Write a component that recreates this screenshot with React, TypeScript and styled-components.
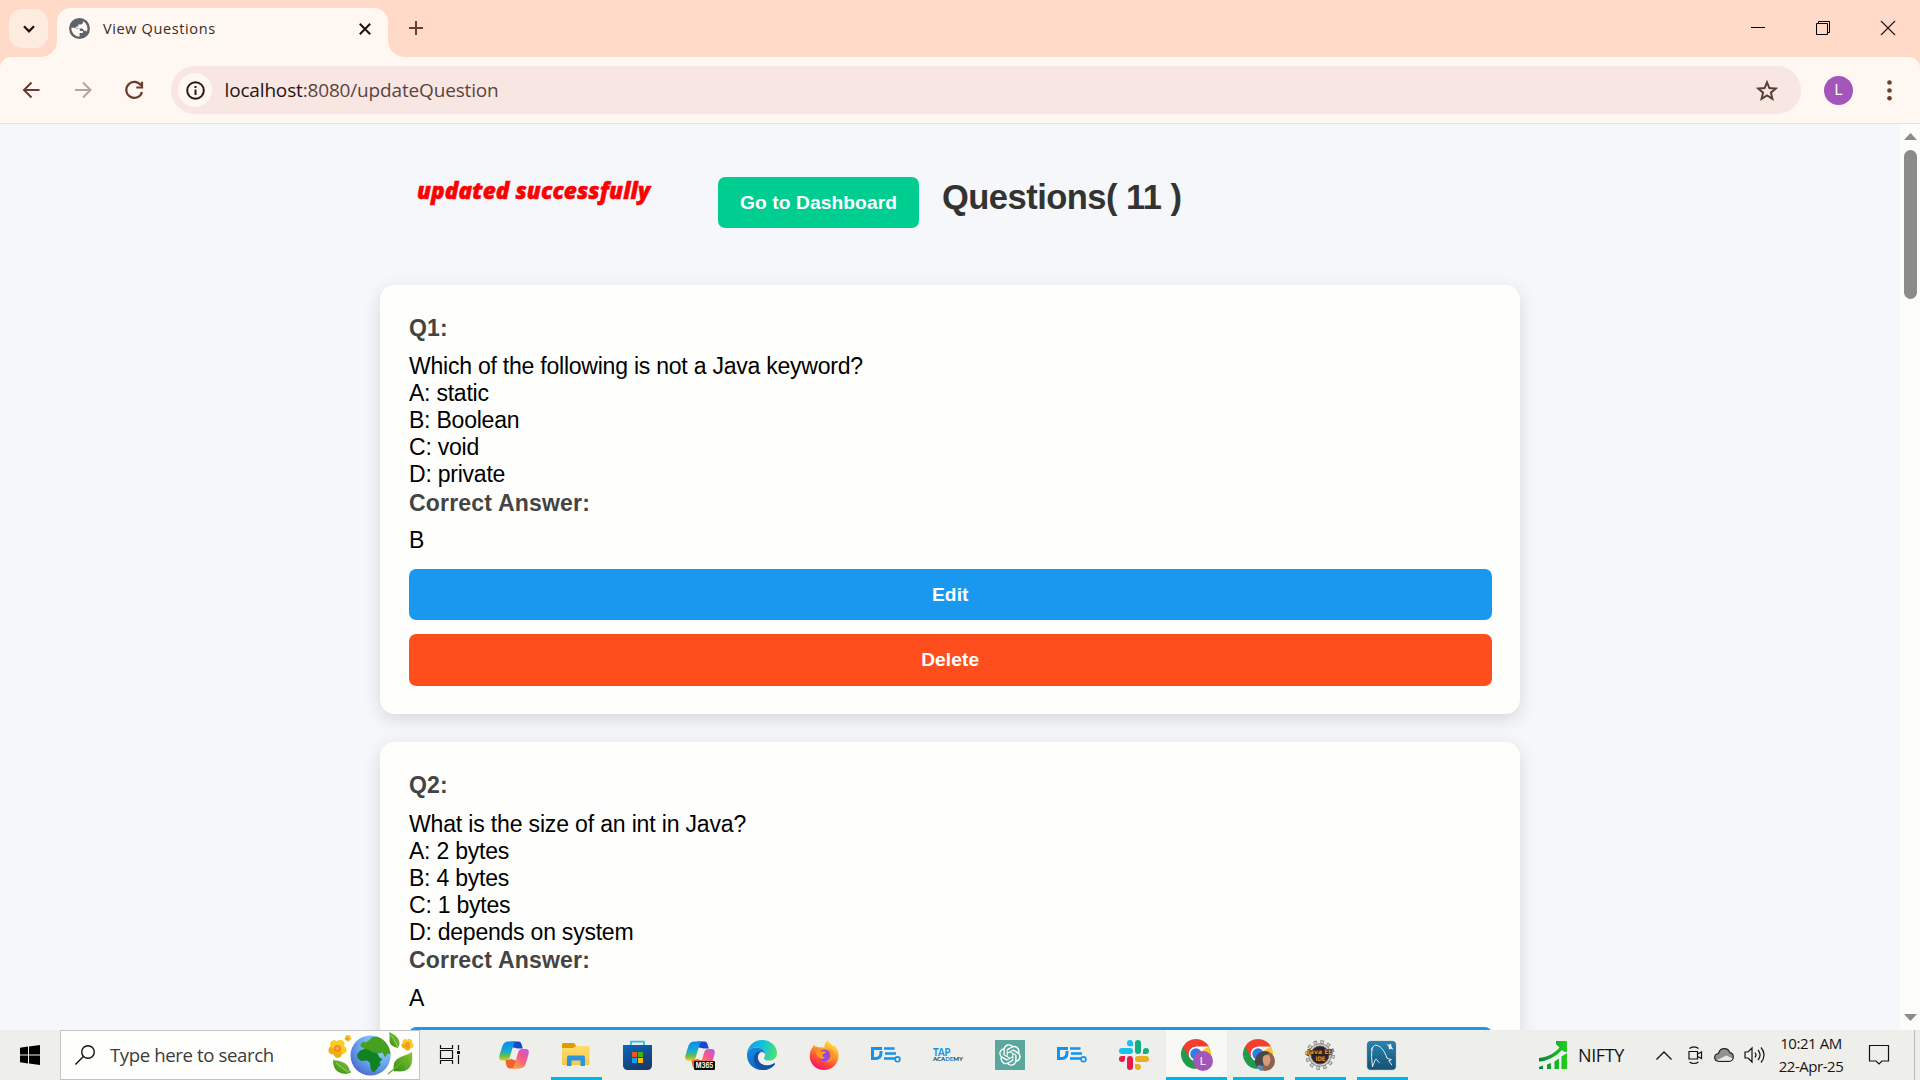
import React from "react";
import styled, { createGlobalStyle } from "styled-components";

const ui = `"Open Sans", "Noto Sans", sans-serif`;
const arial = `"Liberation Sans", Arial, sans-serif`;

const Global = createGlobalStyle`
  * { box-sizing: border-box; }
  html, body { margin: 0; padding: 0; overflow: hidden; }
  svg { display: block; flex: none; overflow: visible; }
`;

const Screen = styled.div`
  width: 1920px;
  height: 1080px;
  display: flex;
  flex-direction: column;
  overflow: hidden;
  background: #f5f7fa;
`;

/* ---------- browser chrome ---------- */
const TabStrip = styled.div`
  height: 57px;
  flex: none;
  display: flex;
  background: #ffdac8;
  padding-left: 9px;
`;
const TabSearch = styled.div`
  width: 39px;
  height: 39px;
  margin-top: 9px;
  border-radius: 13px;
  background: #ffece1;
  display: flex;
  align-items: center;
  justify-content: center;
`;
const Tab = styled.div`
  position: relative;
  margin: 8px 0 0 9px;
  width: 331px;
  height: 49px;
  border-radius: 14px 14px 0 0;
  background: #fff7f2;
  display: flex;
  align-items: center;
  padding: 0 17px 8px 12px;
  &::before,
  &::after {
    content: "";
    position: absolute;
    bottom: 0;
    width: 16px;
    height: 16px;
  }
  &::before {
    left: -16px;
    background: radial-gradient(circle at 0 0, transparent 15.5px, #fff7f2 16px);
  }
  &::after {
    right: -16px;
    background: radial-gradient(circle at 100% 0, transparent 15.5px, #fff7f2 16px);
  }
`;
const TabTitle = styled.div`
  flex: 1;
  margin-left: 13px;
  font: 400 14.5px/20px ${ui};
  letter-spacing: 0.62px;
  color: #3a2a24;
  white-space: nowrap;
`;
const NewTab = styled.div`
  margin-left: 21px;
  padding-top: 21px;
`;
const WindowButtons = styled.div`
  margin-left: auto;
  padding: 21px 25px 0 0;
  display: flex;
  gap: 51px;
`;
const ToolbarBack = styled.div`
  flex: none;
  background: #ffdac8;
`;
const Toolbar = styled.div`
  height: 67px;
  display: flex;
  align-items: center;
  background: #fff7f2;
  border-bottom: 1px solid #f8dfd5;
  border-radius: 11px 11px 0 0;
  padding: 0 24px 0 21px;
`;
const NavButtons = styled.div`
  display: flex;
  width: 150px;
  gap: 31.5px;
`;
const Omnibox = styled.div`
  width: 1630px;
  height: 48px;
  border-radius: 24px;
  background: #f8e6e3;
  display: flex;
  align-items: center;
  padding: 0 23px 0 7px;
`;
const SiteInfo = styled.div`
  width: 34px;
  height: 34px;
  border-radius: 50%;
  background: #fff7f2;
  display: flex;
  align-items: center;
  justify-content: center;
`;
const Url = styled.div`
  flex: 1;
  margin-left: 12.5px;
  font: 400 19px/26px ${ui};
  letter-spacing: -0.16px;
  color: #5a443d;
  white-space: nowrap;
  span { color: #26140f; }
`;
const Avatar = styled.div`
  width: 29px;
  height: 29px;
  border-radius: 50%;
  background: #a355b9;
  color: #fff;
  font: 400 15px/29px Roboto, sans-serif;
  text-align: center;
  margin-left: 23px;
`;
const Dots = styled.div`
  margin-left: auto;
  padding-right: 4px;
`;

/* ---------- page ---------- */
const Viewport = styled.div`
  height: 906px;
  flex: none;
  display: flex;
  overflow: hidden;
`;
const Page = styled.main`
  width: 1900px;
  padding-left: 380px;
  font-family: ${arial};
`;
const Header = styled.header`
  height: 160.6px;
  display: flex;
  align-items: flex-start;
  padding-left: 37px;
  white-space: nowrap;
`;
const Message = styled.div`
  width: 301px;
  margin-top: 51px;
  font: italic 900 22.5px/32px "Noto Sans", "Open Sans", sans-serif;
  letter-spacing: 0.1px;
  -webkit-text-stroke: 0.5px #fd0002;
  color: #fd0002;
`;
const Button = styled.button<{ $color: string }>`
  display: block;
  width: 100%;
  height: 51.4px;
  border: 0;
  border-radius: 7.2px;
  padding: 0;
  background: ${(p) => p.$color};
  color: #fffffe;
  font: 700 19.2px/22px ${arial};
  letter-spacing: 0.1px;
`;
const DashboardSlot = styled.div`
  width: 201px;
  margin: 53px 23px 0 0;
`;
const Title = styled.h1`
  margin: 53px 0 0;
  font: 700 34.5px/40px ${arial};
  letter-spacing: -0.52px;
  color: #333332;
`;
const Card = styled.section`
  width: 1140px;
  height: 429.2px;
  margin-bottom: 28.4px;
  padding: 30px 28.5px 0 29px;
  border-radius: 14.4px;
  background: #fefffc;
  box-shadow: 0 5px 18px rgba(0, 0, 0, 0.13);
`;
const Label = styled.div<{ $top?: number; $bottom?: number }>`
  margin: ${(p) => p.$top ?? 0}px 0 ${(p) => p.$bottom ?? 11.4}px;
  font: 700 23.04px/27px ${arial};
  letter-spacing: 0.18px;
  color: #444443;
`;
const Line = styled.div<{ $track?: number }>`
  font: 400 23.04px/27px ${arial};
  letter-spacing: ${(p) => p.$track ?? -0.24}px;
  color: #000;
  white-space: nowrap;
`;
const Actions = styled.div`
  margin-top: 14.8px;
  display: flex;
  flex-direction: column;
  gap: 14px;
`;
const Scrollbar = styled.div`
  width: 20px;
  background: #fcfdfa;
  display: flex;
  flex-direction: column;
  align-items: center;
  padding: 9px 0;
`;
const Thumb = styled.div`
  width: 13px;
  height: 149px;
  margin: 10px 0 auto;
  border-radius: 7px;
  background: #8b8b8a;
`;

/* ---------- taskbar ---------- */
const Taskbar = styled.footer`
  height: 50px;
  flex: none;
  display: flex;
  background: #eeeeeb;
  position: relative;
`;
const Start = styled.div`
  width: 60px;
  padding: 15px 0 0 20px;
`;
const Search = styled.div`
  width: 360px;
  height: 50px;
  border: 1px solid #c3c4c3;
  background: #fefffc;
  display: flex;
  align-items: center;
  padding-left: 14px;
`;
const SearchText = styled.div`
  width: 218px;
  margin-left: 15px;
  font: 400 18.6px/26px ${ui};
  letter-spacing: -0.39px;
  color: #3b3b3b;
  white-space: nowrap;
`;
const App = styled.div<{ $open?: boolean; $active?: boolean }>`
  width: 62px;
  height: 50px;
  display: flex;
  flex-direction: column;
  align-items: center;
  justify-content: center;
  background: ${(p) => (p.$active ? "linear-gradient(to right, transparent 1px, #f8f8f5 1px)" : "none")};
  position: relative;
  &::after {
    content: "";
    position: absolute;
    bottom: 0;
    left: ${(p) => (p.$active ? 1 : 6)}px;
    width: ${(p) => (p.$active ? 61 : 51)}px;
    height: 3px;
    background: ${(p) => (p.$open ? "#00b5ea" : "none")};
  }
`;
const TaskView = styled.div`
  width: 63px;
  padding: 15px 0 0 20px;
`;
const Tray = styled.div`
  margin-left: auto;
  width: 381px;
  display: flex;
  align-items: center;
`;
const Nifty = styled.div`
  width: 78px;
  margin-left: 11px;
  font: 400 18px/24px ${ui};
  letter-spacing: -0.4px;
  color: #151515;
`;
const TrayIcons = styled.div`
  display: flex;
  align-items: center;
  width: 110px;
`;
const TrayIcon = styled.div<{ $w: number }>`
  width: ${(p) => p.$w}px;
`;
const Clock = styled.div`
  width: 90px;
  text-align: center;
  font: 400 15px/23px ${ui};
  letter-spacing: -0.45px;
  color: #151515;
  white-space: nowrap;
`;
const Notify = styled.div`
  margin-left: 13px;
`;
const PeekLine = styled.div`
  width: 1px;
  height: 50px;
  margin: 0 5px 0 auto;
  background: #bcbcba;
`;

/* ---------- drawings ---------- */
const Copilot = ({ id, m365 }: { id: string; m365?: boolean }) => (
  <svg width="30" height="30" viewBox="0 0 30 30">
    <defs>
      <linearGradient id={id + "a"} x1="0" y1="0" x2="0" y2="1">
        <stop offset="0" stopColor="#0b8af0" />
        <stop offset=".45" stopColor="#12a9d5" />
        <stop offset=".75" stopColor="#5cbf55" />
        <stop offset="1" stopColor="#ecc713" />
      </linearGradient>
      <linearGradient id={id + "b"} x1="1" y1="0" x2=".3" y2="1">
        <stop offset="0" stopColor="#b45cf0" />
        <stop offset=".45" stopColor="#f4568c" />
        <stop offset="1" stopColor="#ff9a4c" />
      </linearGradient>
    </defs>
    <path d="M12 1.500h7.500c1.800 0 2.500 1.200 3 2.800l1.300 4.200h-5L12 7z" fill="#1747d1" />
    <path d="M18 28.500h-7c-2 0-3-1-3.600-3L6.300 20l6-1 6 2z" fill="#f2652f" />
    <path d="M9.500 1.500h7.700c-1.700.6-2.400 2.100-3 4.200l-3.300 11.100c-.8 2.600-2 3.700-4.400 3.700H3.300C.5 20.500-.3 18 .5 15.200L3.200 6.400C4.300 3 6.300 1.500 9.500 1.500z" fill={`url(#${id}a)`} />
    <path d="M20.500 28.500h-8c1.700-.6 2.600-2.200 3.200-4.200l3.200-11.100c.8-2.600 2-4.200 4.500-4.200h3.300c2.900 0 3.600 2.500 2.800 5.300l-2.700 9.300c-1 3.400-3 4.900-6.300 4.900z" fill={`url(#${id}b)`} />
    {m365 && (
      <>
        <rect x="9" y="21" width="21" height="9" rx="1.200" fill="#090909" />
        <text x="19.500" y="28.200" textAnchor="middle" fontFamily="Inter, sans-serif" fontWeight="700" fontSize="7.200" textLength="17.500" lengthAdjust="spacingAndGlyphs" fill="#fff">M365</text>
      </>
    )}
  </svg>
);

const Explorer = () => (
  <svg width="28" height="26" viewBox="0 0 28 26">
    <defs>
      <linearGradient id="fold" x1="0" y1="0" x2="0" y2="1">
        <stop offset="0" stopColor="#ffdc6b" />
        <stop offset="1" stopColor="#f6c84c" />
      </linearGradient>
    </defs>
    <path d="M0 2.500A1.500 1.500 0 0 1 1.500 1H12l2 2.500V6H0z" fill="#dd9a06" />
    <path d="M0 6h11l3-2h12.500L27.500 5.200V22a1 1 0 0 1-1 1H1a1 1 0 0 1-1-1z" fill="url(#fold)" />
    <path d="M5 24V15.500a2 2 0 0 1 2-2h14a2 2 0 0 1 2 2V24h-4.500v-5.500h-9V24z" fill="#2c93dd" />
  </svg>
);

const Store = () => (
  <svg width="31" height="30" viewBox="0 0 31 30">
    <defs>
      <linearGradient id="store" x1="0" y1="0" x2=".5" y2="1">
        <stop offset="0" stopColor="#0768bd" />
        <stop offset="1" stopColor="#1b3a70" />
      </linearGradient>
    </defs>
    <path d="M8 6V1.700h13V6" fill="none" stroke="#2dbdf0" strokeWidth="1.800" />
    <path d="M0 5h29v20.500a4.500 4.500 0 0 1-4.500 4.500h-20A4.500 4.500 0 0 1 0 25.500z" fill="url(#store)" />
    <path d="M9 12h5v5H9z" fill="#f35325" />
    <path d="M15 12h5v5h-5z" fill="#3fb511" />
    <path d="M9 18h5v5H9z" fill="#0ba2f2" />
    <path d="M15 18h5v5h-5z" fill="#ffba08" />
  </svg>
);

const Edge = () => (
  <svg width="30" height="30" viewBox="0 0 30 30">
    <defs>
      <linearGradient id="eg1" x1="0" y1=".3" x2="1" y2=".5">
        <stop offset="0" stopColor="#159fe6" />
        <stop offset=".5" stopColor="#11c2da" />
        <stop offset="1" stopColor="#4fe070" />
      </linearGradient>
      <linearGradient id="eg2" x1="0" y1="0" x2=".8" y2="1">
        <stop offset="0" stopColor="#168fe2" />
        <stop offset="1" stopColor="#0a55b5" />
      </linearGradient>
    </defs>
    <path d="M0 14C.5 6 7 0 15 0c9 0 15 6.500 15 13 0 4.600-3.400 7.600-7.800 7.600-3.600 0-5.200-1.300-5.200-2.400 0-.9 1.200-1.500 1.200-3.700C18.200 11 14.500 7.500 9 7.500 4.500 7.500 1 10 0 14z" fill="url(#eg1)" />
    <path d="M0 14C1 10 4.500 7.500 9 7.500c5.300 0 9 3.200 9.200 6.700-.8-1.600-2.200-2.200-3.400-2.200-2.200 0-4 2.500-4 5.300 0 4.700 4 8.200 9 8.200 3.400 0 6-1.400 7.300-2.200.7-.3 1.200.2.800.9C25.200 28 20.500 30 15 30 6 30 0 23 0 15z" fill="url(#eg2)" />
    <path d="M9.500 12.500c-3.500 3-3.700 9.500 0 13.500 2 2.300 4.500 3.600 7.500 3.900 4.500-.3 8.300-2.300 10.900-5.700.4-.7-.1-1.200-.8-.9-1.300.8-3.900 2.200-7.300 2.200-5 0-9-3.500-9-8.200 0-2.300 1.200-4.300 2.700-5-1.400-.6-2.900-.6-4 .2z" fill="#1152a4" />
  </svg>
);

const Firefox = () => (
  <svg width="30" height="30" viewBox="0 0 30 30">
    <defs>
      <linearGradient id="ff" x1=".8" y1="0" x2=".3" y2="1">
        <stop offset="0" stopColor="#fff04a" />
        <stop offset=".4" stopColor="#ff9a24" />
        <stop offset=".75" stopColor="#ff4340" />
        <stop offset="1" stopColor="#f0146a" />
      </linearGradient>
    </defs>
    <path d="M18.500 0c1 3 4.600 4.400 6.400 7.200-.1-1-.2-1.700-.6-2.500 3 2.400 5.200 6.300 5.200 10.800C29.500 24 23 30 15 30 7 30 .7 24 .7 16c0-3.400 1.300-6.800 3-8.700C4 6.200 4.700 5 5.500 4.500c0 1 .2 1.700.6 2.300 1.800-.2 3.400 0 4.700.7 2-.6 3.200-.4 4.400.4C15.200 5 16.500 2 18.500 0z" fill="url(#ff)" />
    <circle cx="15.500" cy="15.500" r="6" fill="#9a48dc" />
    <path d="M6 11.500c2-1.200 4-1 5.500 0 2 .1 4.800-.2 5.500.6-.5 1.500-3.200 1.800-3.500 3-.1 1.500 1 2.400 2.500 2.400-1.500 1.600-4 1.800-5.500.6C8.500 16.500 7.500 13.500 6 11.500z" fill="#ff9a26" />
    <path d="M15.500 9.600c3.500-.8 6.300 2 6.100 5.900-.2 3.300-2.600 5.800-6.100 6 5.500 1.200 9.200-1.500 9.200-6.500C24.700 10 19.500 7.800 15.500 9.600z" fill="#ff8d33" />
  </svg>
);

const DeLogo = () => (
  <svg width="30" height="17" viewBox="0 0 30 17">
    <g fill="none" stroke="#1392ee" strokeWidth="3">
      <path d="M1.500 0v13M0 1.500h11M1.500 11.500h3c3.500 0 5.500-2 5.500-6V4" />
      <path d="M13 1.500h10.500M14 6.500h11M13 11.500h11" strokeWidth="2.600" />
      <circle cx="26.500" cy="12.300" r="2.400" strokeWidth="1.600" />
    </g>
  </svg>
);

const TapLogo = () => (
  <svg width="30" height="14" viewBox="0 0 30 14">
    <text x="0" y="8.200" fontFamily="Lato, sans-serif" fontWeight="900" fontSize="10.500" textLength="17.500" lengthAdjust="spacingAndGlyphs" fill="#1a94e2">TAP</text>
    <text x="0" y="13.200" fontFamily="Lato, sans-serif" fontWeight="900" fontSize="6.200" textLength="30" lengthAdjust="spacingAndGlyphs" fill="#1b4a68">
      ACA<tspan fill="#1a94e2">DE</tspan>MY
    </text>
  </svg>
);

const Gpt = () => (
  <svg width="30" height="30" viewBox="0 0 30 30">
    <path d="M0 0h30v30H0z" fill="#5aa89d" />
    <g transform="translate(4.200 4.200) scale(.9)" fill="#fff">
      <path d="M22.282 9.821a5.985 5.985 0 0 0-.516-4.910 6.046 6.046 0 0 0-6.510-2.900A6.065 6.065 0 0 0 4.981 4.180a5.985 5.985 0 0 0-3.998 2.900 6.046 6.046 0 0 0 .743 7.097 5.980 5.980 0 0 0 .510 4.911 6.051 6.051 0 0 0 6.515 2.900A5.985 5.985 0 0 0 13.260 24a6.056 6.056 0 0 0 5.772-4.206 5.990 5.990 0 0 0 3.997-2.900 6.056 6.056 0 0 0-.747-7.073zM13.260 22.430a4.476 4.476 0 0 1-2.876-1.040l.141-.081 4.779-2.758a.795.795 0 0 0 .392-.681v-6.737l2.020 1.168a.071.071 0 0 1 .038.052v5.583a4.504 4.504 0 0 1-4.494 4.494zM3.600 18.304a4.470 4.470 0 0 1-.535-3.014l.142.085 4.783 2.759a.771.771 0 0 0 .780 0l5.843-3.369v2.332a.080.080 0 0 1-.033.062L9.740 19.950a4.500 4.500 0 0 1-6.140-1.646zM2.340 7.896a4.485 4.485 0 0 1 2.366-1.973V11.600a.766.766 0 0 0 .388.676l5.815 3.355-2.020 1.168a.076.076 0 0 1-.071 0l-4.830-2.786A4.504 4.504 0 0 1 2.340 7.872zm16.597 3.855l-5.833-3.387L15.119 7.200a.076.076 0 0 1 .071 0l4.830 2.791a4.494 4.494 0 0 1-.676 8.105v-5.678a.790.790 0 0 0-.407-.667zm2.010-3.023l-.141-.085-4.774-2.782a.776.776 0 0 0-.785 0L9.409 9.230V6.897a.066.066 0 0 1 .028-.061l4.830-2.787a4.500 4.500 0 0 1 6.680 4.660zm-12.640 4.135l-2.020-1.164a.080.080 0 0 1-.038-.057V6.075a4.500 4.500 0 0 1 7.375-3.453l-.142.080L8.704 5.460a.795.795 0 0 0-.393.681zm1.097-2.365l2.602-1.500 2.607 1.500v2.999l-2.597 1.500-2.607-1.500z" />
    </g>
  </svg>
);

const Slack = () => (
  <svg width="30" height="30" viewBox="0 0 30 30">
    <g fill="#19c0ef">
      <rect x="0" y="8" width="14" height="6" rx="3" />
      <path d="M8 3a3 3 0 1 1 6 0v3.200h-3A3 3 0 0 1 8 3z" />
    </g>
    <g fill="#12ae83">
      <rect x="16" y="0" width="6" height="14" rx="3" />
      <path d="M24 11a3 3 0 1 1 3 3h-3z" />
    </g>
    <g fill="#e61b48">
      <rect x="8" y="16" width="6" height="14" rx="3" />
      <path d="M6 16v3a3 3 0 1 1-3-3z" />
    </g>
    <g fill="#e9b022">
      <rect x="16" y="16" width="14" height="6" rx="3" />
      <path d="M16 24h3a3 3 0 1 1-3 3z" />
    </g>
  </svg>
);

const ChromeIcon = ({ photo }: { photo?: boolean }) => (
  <svg width="30" height="32" viewBox="0 0 30 32">
    <path d="M15 15 28 7.500A15 15 0 0 1 15 30z" fill="#fcc72b" />
    <path d="M15 15v15A15 15 0 0 1 2 7.500z" fill="#219a4c" />
    <path d="M2 7.500A15 15 0 0 1 28 7.500H15L8.500 18.700z" fill="#f0402f" />
    <circle cx="15" cy="15" r="7.300" fill="#fff" />
    <circle cx="15" cy="15" r="5.700" fill="#2b7de9" />
    {photo ? (
      <>
        <circle cx="22" cy="22" r="10" fill="#8d6251" />
        <path d="M13 18c2-5 8-7 13-5l-4 6-2 8-5 2c-3-3-4-7-2-11z" fill="#49474c" />
        <path d="M20 18c2-3 6-3 7 0s0 8-3 9-5-5-4-9z" fill="#dd9a78" />
        <path d="M15 26l5 1-1 5c-2 0-4-2-5-4z" fill="#5190bd" />
      </>
    ) : (
      <>
        <circle cx="22" cy="22" r="10" fill="#a355b9" />
        <text x="21.800" y="26.200" textAnchor="middle" fontFamily="Roboto, sans-serif" fontSize="11.500" fill="#fff">L</text>
      </>
    )}
  </svg>
);

const Eclipse = () => (
  <svg width="30" height="30" viewBox="0 0 30 30">
    <circle cx="15" cy="15" r="12.800" fill="none" stroke="#787878" strokeWidth="4" strokeDasharray="3.400 3.300" />
    <circle cx="15" cy="15" r="12.800" fill="none" stroke="#cfcfcd" strokeWidth="2.600" strokeDasharray="2.400 4.300" strokeDashoffset="-.5" />
    <circle cx="15" cy="15" r="11.300" fill="#d5d5d3" stroke="#777" strokeWidth=".8" />
    <circle cx="15" cy="15" r="9" fill="#272333" stroke="#555" />
    <text x="15" y="14.300" textAnchor="middle" fontFamily="DejaVu Sans, sans-serif" fontWeight="700" fontSize="6.300" textLength="25" lengthAdjust="spacingAndGlyphs" fill="#f58a1c" stroke="#2a1808" strokeWidth=".9" paintOrder="stroke">Java EE</text>
    <text x="15.500" y="20.800" textAnchor="middle" fontFamily="DejaVu Sans, sans-serif" fontWeight="700" fontSize="6.300" textLength="10" lengthAdjust="spacingAndGlyphs" fill="#f58a1c">IDE</text>
  </svg>
);

const MySql = () => (
  <svg width="31" height="29" viewBox="0 0 31 29">
    <defs>
      <linearGradient id="mysql" x1="0" y1="0" x2="0" y2="1">
        <stop offset="0" stopColor="#2a83ad" />
        <stop offset="1" stopColor="#155274" />
      </linearGradient>
    </defs>
    <rect x=".4" y=".4" width="28.200" height="28.200" rx="3" fill="url(#mysql)" stroke="#1b6489" strokeWidth=".8" />
    <path d="M5.500 26c-.3-5-1.300-9-.8-14 .2-4.500 1.300-7.500 3.800-7.800 4.500 0 9 5 11.500 13l4.500 1.500-2.700 1 3.200 4.500M5.500 25.500c1.500-2 1.500-6 3.500-7.500 1.500.8 1.500 2.500 3.500 3.800M4.800 9.500c-.8-1.500 0-3 1.200-3.200" fill="none" stroke="#e8f1f6" strokeWidth="1" />
    <path d="M19.500 3.200l2.500.5 2-1 .6 3.300 2 2.500-2.600-.8-2 .8-.3-3z" fill="#e8f1f6" />
  </svg>
);

const Flower = ({ x, y, s }: { x: number; y: number; s: number }) => (
  <g transform={`translate(${x} ${y}) scale(${s})`}>
    {[0, 72, 144, 216, 288].map((a) => (
      <ellipse key={a} cx="0" cy="-5" rx="4" ry="4" fill={a > 100 && a < 230 ? "#f1ae10" : "#fbcb22"} transform={`rotate(${a + 34})`} />
    ))}
    <circle r="3.400" fill="#f58a1b" />
    <circle r="1.600" fill="#f9a94c" />
  </g>
);

const SearchArt = () => (
  <svg width="88" height="46" viewBox="0 0 88 46">
    <defs>
      <radialGradient id="sea" cx=".7" cy=".25" r=".9">
        <stop offset="0" stopColor="#a4d8ff" />
        <stop offset=".55" stopColor="#6aa5ee" />
        <stop offset="1" stopColor="#435fc5" />
      </radialGradient>
      <linearGradient id="leaf" x1="0" y1="1" x2="1" y2="0">
        <stop offset="0" stopColor="#2f8f14" />
        <stop offset="1" stopColor="#8cc63a" />
      </linearGradient>
      <clipPath id="earth"><circle cx="42.500" cy="23.500" r="20" /></clipPath>
    </defs>
    <circle cx="42.500" cy="23.500" r="20" fill="url(#sea)" />
    <g clipPath="url(#earth)">
      <path d="M32.500 12l3-2.500 2 1 4-2.500 2-2.500 8-2 8 4 5 9-2 6-3-1-2.500 4-2.500-5-4 1-3-1.500-3 .5-3-1.500-3 1-3.500-.5 1-3.500-3-1z" fill="#46a01f" />
      <path d="M29 22.500l3-4 5-1.500 4 1 3 2 5 .5 2.500 5 3 1.500-3.500 4-.5 4-3.500 4.500-2.500.5-2-4-.5-5-3-2.500-6 .5-3.500-3z" fill="#118224" />
      <path d="M50.500 32.500l1.500-2.500.5 3-1.500 2z" fill="#118224" />
    </g>
    <Flower x={9.500} y={16.500} s={1.050} />
    <Flower x={20} y={6} s={0.380} />
    <Flower x={79.500} y={12.500} s={0.680} />
    <path d="M5 28c7 1 15 2 16.500 10 .4 1 1 1.500 2 2-2 1.500-5 2.500-9 1.500C7.500 40 5 35 5 28z" fill="url(#leaf)" />
    <path d="M8 31c4 3 8 6 12 9" stroke="#c5e183" fill="none" strokeWidth=".7" />
    <path d="M61 0c7 3 11 7 10.500 12-.5 2-1 3-2 4-4-1-8-3-8-8 0-3 .5-5-.5-8z" fill="url(#leaf)" />
    <path d="M63 3c3 4 5 8 6.500 12" stroke="#c5e183" fill="none" strokeWidth=".7" />
    <path d="M84 20c1 9 0 17-8 19-4 1-8 0-10 .5 0-2-1-4 0-8 2-7 11-7 18-11.500z" fill="url(#leaf)" />
    <path d="M80 25c-6 5-11 10-20 17" stroke="#71a92c" fill="none" strokeWidth="1.300" />
  </svg>
);

const Globe = () => (
  <svg width="21" height="21" viewBox="0 0 21 21">
    <circle cx="10.500" cy="10.500" r="10.500" fill="#5e6368" />
    <path fill="#fff7f2" d="M2.300 9.800h4.900c2.600 0 3.800 1.100 3.800 3.100h2.900v2.200h-3.300v3.600A8.300 8.300 0 0 1 2.300 9.800zM13.800 3c.6 2.200-.4 3.500-2.300 3.500H9.300v1.900H7v2.100h5.800c1.300 0 1.800 1 1.800 2.300h1.800c.8 0 1.200.6 1.300 1.200A8.300 8.300 0 0 0 13.800 3z" />
  </svg>
);

/* ---------- data ---------- */
const questions = [
  {
    n: 1,
    text: "Which of the following is not a Java keyword?",
    track: -0.24,
    options: ["A: static", "B: Boolean", "C: void", "D: private"],
    answer: "B",
  },
  {
    n: 2,
    text: "What is the size of an int in Java?",
    track: -0.17,
    options: ["A: 2 bytes", "B: 4 bytes", "C: 1 bytes", "D: depends on system"],
    answer: "A",
  },
];

export default function ViewQuestions() {
  return (
    <Screen>
      <Global />
      <TabStrip>
        <TabSearch>
          <svg width="12" height="8" viewBox="0 0 12 8"><path d="M1 1.300l5 5 5-5" fill="none" stroke="#1f120e" strokeWidth="2.300" /></svg>
        </TabSearch>
        <Tab>
          <Globe />
          <TabTitle>View Questions</TabTitle>
          <svg width="12" height="12" viewBox="0 0 12 12"><path d="M.8.8l10.400 10.400M11.200.8.8 11.200" stroke="#1f120e" strokeWidth="2" /></svg>
        </Tab>
        <NewTab>
          <svg width="14" height="14" viewBox="0 0 14 14"><path d="M7 0v14M0 7h14" stroke="#6b3b2c" strokeWidth="2" /></svg>
        </NewTab>
        <WindowButtons>
          <svg width="14" height="14" viewBox="0 0 14 14"><path d="M0 6.500h14" stroke="#000" /></svg>
          <svg width="14" height="14" viewBox="0 0 14 14"><path d="M.5 2.500h11v11H.5zM2.500 2.500v-2h11v11h-2" fill="none" stroke="#000" /></svg>
          <svg width="14" height="14" viewBox="0 0 14 14"><path d="M0 0l14 14M14 0 0 14" stroke="#1a1210" strokeWidth="1.100" /></svg>
        </WindowButtons>
      </TabStrip>

      <ToolbarBack>
        <Toolbar>
          <NavButtons>
            <svg width="20" height="18" viewBox="0 0 20 18"><path d="M18.500 9H3M10.500 1.500 3 9l7.500 7.500" fill="none" stroke="#6b3b2c" strokeWidth="2" /></svg>
            <svg width="20" height="18" viewBox="0 0 20 18"><path d="M2 9h15.500M10 1.500 17.500 9 10 16.500" fill="none" stroke="#b5a39c" strokeWidth="2" /></svg>
            <svg width="20" height="18" viewBox="0 0 20 18"><path d="M17 4.500A8 8 0 1 0 18 11M18 .8V6.500h-5.700" fill="none" stroke="#6b3b2c" strokeWidth="2.200" /></svg>
          </NavButtons>
          <Omnibox>
            <SiteInfo>
              <svg width="19" height="19" viewBox="0 0 19 19"><circle cx="9.500" cy="9.500" r="8.300" fill="none" stroke="#2a1813" strokeWidth="2" /><path d="M9.500 8.500v5.500M9.500 5v2" stroke="#2a1813" strokeWidth="2" /></svg>
            </SiteInfo>
            <Url><span>localhost</span>:8080/updateQuestion</Url>
            <svg width="22" height="21" viewBox="0 0 22 21"><path d="M11 2.300l2.400 5.800 6.300.5-4.800 4.100 1.500 6.100L11 15.500l-5.400 3.300 1.500-6.100-4.800-4.100 6.300-.5z" fill="none" stroke="#573f37" strokeWidth="2" /></svg>
          </Omnibox>
          <Avatar>L</Avatar>
          <Dots>
            <svg width="5" height="21" viewBox="0 0 5 21"><g fill="#6b3b2c"><circle cx="2.500" cy="2.500" r="2.300" /><circle cx="2.500" cy="10.500" r="2.300" /><circle cx="2.500" cy="18.300" r="2.300" /></g></svg>
          </Dots>
        </Toolbar>
      </ToolbarBack>

      <Viewport>
        <Page>
          <Header>
            <Message>updated successfully</Message>
            <DashboardSlot><Button $color="#00ce90">Go to Dashboard</Button></DashboardSlot>
            <Title>Questions( 11 )</Title>
          </Header>
          {questions.map((q) => (
            <Card key={q.n}>
              <Label>Q{q.n}:</Label>
              <Line $track={q.track}>{q.text}</Line>
              {q.options.map((o) => (
                <Line key={o}>{o}</Line>
              ))}
              <Label $top={1.6} $bottom={10.6}>Correct Answer:</Label>
              <Line>{q.answer}</Line>
              <Actions>
                <Button $color="#1899ef">Edit</Button>
                <Button $color="#ff4e1d">Delete</Button>
              </Actions>
            </Card>
          ))}
        </Page>
        <Scrollbar>
          <svg width="13" height="7" viewBox="0 0 13 7"><path d="M0 7 6.500 0 13 7z" fill="#8b8b8a" /></svg>
          <Thumb />
          <svg width="13" height="7" viewBox="0 0 13 7"><path d="M0 0l6.500 7L13 0z" fill="#8b8b8a" /></svg>
        </Scrollbar>
      </Viewport>

      <Taskbar>
        <Start>
          <svg width="20" height="20" viewBox="0 0 20 20"><path d="M0 2.700 8 1.600V9.500H0zM9 1.400 20 0v9.500H9zM0 10.500h8v7.900L0 17.300zM9 10.500h11V20L9 18.500z" fill="#000" /></svg>
        </Start>
        <Search>
          <svg width="20" height="20" viewBox="0 0 20 20"><circle cx="13" cy="7" r="6.300" fill="none" stroke="#111" strokeWidth="1.400" /><path d="M8.400 11.400.4 19.500" stroke="#111" strokeWidth="1.400" /></svg>
          <SearchText>Type here to search</SearchText>
          <SearchArt />
        </Search>
        <TaskView>
          <svg width="20" height="19" viewBox="0 0 20 19"><path d="M.5 0v3.500h12V0M.5 19v-3.500h12V19M.5 5.500h12v8H.5zM18.500 0v5M18.500 10v9" fill="none" stroke="#111" strokeWidth="1.200" /><path d="M17 6h3v3h-3z" fill="#111" /></svg>
        </TaskView>
        <App><Copilot id="c1" /></App>
        <App $open><Explorer /></App>
        <App><Store /></App>
        <App><Copilot id="c2" m365 /></App>
        <App><Edge /></App>
        <App><Firefox /></App>
        <App><DeLogo /></App>
        <App><TapLogo /></App>
        <App><Gpt /></App>
        <App><DeLogo /></App>
        <App><Slack /></App>
        <App $open $active><ChromeIcon /></App>
        <App $open><ChromeIcon photo /></App>
        <App $open><Eclipse /></App>
        <App $open><MySql /></App>
        <Tray>
          <svg width="28" height="28" viewBox="0 0 28 28">
            <defs>
              <linearGradient id="nifty" x1="0" y1="0" x2="1" y2="0">
                <stop offset="0" stopColor="#07813a" />
                <stop offset="1" stopColor="#22d01f" />
              </linearGradient>
            </defs>
            <path d="M0 17C9 16 16 12 20.500 6.500L17 3V0h11v11h-2.500L23 9C17 15.500 9 20 0 20.500z" fill="url(#nifty)" />
            <path d="M0 26l4-1.500V28H0zM8 23.500l4-1.500v6H8zM15.500 20.500l4.500-3V28h-4.500zM22.500 15.500 28 12v16h-5.500z" fill="url(#nifty)" />
          </svg>
          <Nifty>NIFTY</Nifty>
          <TrayIcons>
            <TrayIcon $w={32}>
              <svg width="16" height="9" viewBox="0 0 16 9"><path d="M.5 8.500 8 1l7.500 7.500" fill="none" stroke="#111" strokeWidth="1.300" /></svg>
            </TrayIcon>
            <TrayIcon $w={26}>
              <svg width="15" height="18" viewBox="0 0 15 18"><path d="M1 5.500h8.500v7.500H1zM9.500 8l4-2v6.500l-4-2M1.500 2.500C4 .2 8 .2 10.500 2.500M1.500 16c2.500 2 6.500 2 9 0" fill="none" stroke="#111" strokeWidth="1.200" /></svg>
            </TrayIcon>
            <TrayIcon $w={30}>
              <svg width="20" height="14" viewBox="0 0 20 14"><path d="M5 13.300C2.500 13.300.7 11.700.7 9.500S2.300 5.800 4.500 5.500C5.300 2.500 7.500.7 10.300.7c2.700 0 4.700 1.600 5.500 4 2 .3 3.500 2 3.500 4.200 0 2.500-1.800 4.400-4.300 4.400z" fill="#929292" stroke="#222" strokeWidth="1.200" /><path d="M3 12 12.500 7.500l6 3-1 1.700-2.500.6H5z" fill="#e8e8e6" /></svg>
            </TrayIcon>
            <svg width="22" height="18" viewBox="0 0 22 18"><path d="M1 6h3l4-4v14l-4-4H1zM11 6.500c1.200 1.500 1.200 3.500 0 5M14 4c2.500 3 2.500 7 0 10M17 1.500c4 4.500 4 10.500 0 15" fill="none" stroke="#111" strokeWidth="1.200" /></svg>
          </TrayIcons>
          <Clock>10:21 AM<br />22-Apr-25</Clock>
          <Notify>
            <svg width="20" height="20" viewBox="0 0 20 20"><path d="M.5.500h19V16H13l-3 3-3-3H.5z" fill="none" stroke="#111" strokeWidth="1.200" /></svg>
          </Notify>
          <PeekLine />
        </Tray>
      </Taskbar>
    </Screen>
  );
}
